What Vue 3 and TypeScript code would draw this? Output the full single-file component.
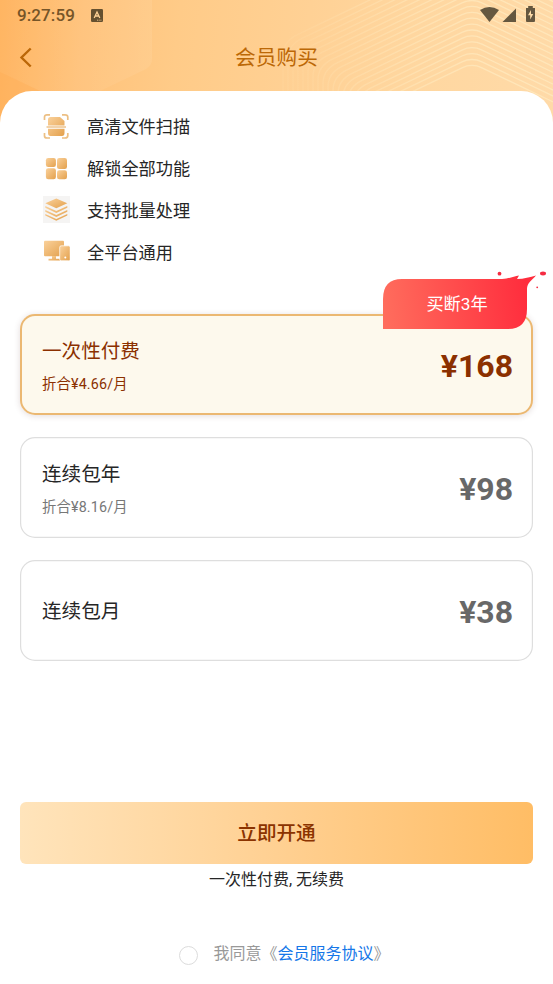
<script setup lang="ts">
import { ref } from 'vue'

interface Feature { icon: 'scan' | 'grid' | 'layers' | 'devices'; label: string }
interface Plan { id: number; name: string; note?: string; price: string; tag?: string }

const features: Feature[] = [
  { icon: 'scan', label: '高清文件扫描' },
  { icon: 'grid', label: '解锁全部功能' },
  { icon: 'layers', label: '支持批量处理' },
  { icon: 'devices', label: '全平台通用' },
]
const plans: Plan[] = [
  { id: 1, name: '一次性付费', note: '折合¥4.66/月', price: '¥168', tag: '买断3年' },
  { id: 2, name: '连续包年', note: '折合¥8.16/月', price: '¥98' },
  { id: 3, name: '连续包月', price: '¥38' },
]
const selected = ref(1)
const agreed = ref(false)

// Concentric rounded hexagon outlines in the header
const contours: string[] = Array.from({ length: 20 }, (_, i) => {
  const top = 63 - 5.9 * i
  const left = 378 - 5 * i
  const cornerY = top + 0.48 * (472 - left)
  return `M${left} 170V${cornerY + 14}Q${left} ${cornerY} ${left + 14} ${cornerY - 6.7}L462 ${top + 4.8}Q472 ${top} 482 ${top + 4.8}L570 ${top + 47}`
})
</script>

<template>
  <div class="page">
    <header class="header">
      <svg class="backdrop" viewBox="0 0 553 124" width="553" height="124" aria-hidden="true">
        <defs>
          <linearGradient id="hex" x1="0" y1="0" x2="1" y2="0">
            <stop offset="0" stop-color="#fff" stop-opacity="0" />
            <stop offset="1" stop-color="#fff" stop-opacity=".07" />
          </linearGradient>
          <linearGradient id="fade" gradientUnits="userSpaceOnUse" x1="300" y1="0" x2="480" y2="0">
            <stop offset="0" stop-color="#fff0c8" stop-opacity=".08" />
            <stop offset="1" stop-color="#fff0c8" stop-opacity=".55" />
          </linearGradient>
        </defs>
        <path d="M0 0H152V59Q152 65 146 69L98 92H42L0 72Z" fill="url(#hex)" />
        <path d="M0 72L42 92V124H0Z" fill="#ffa84b" opacity=".25" />
        <path v-for="(d, i) in contours" :key="i" :d="d" fill="none" stroke="url(#fade)" stroke-width="1.3" />
      </svg>
      <div class="status">
        <span class="time">9:27:59</span>
        <svg class="ime" viewBox="0 0 12 13" width="12" height="13">
          <rect width="12" height="13" rx="1.2" fill="#65502f" />
          <path d="M3.2 9L6 3L8.8 9M4.3 7H7.7" fill="none" stroke="#ffd295" stroke-width="1.3" />
          <path d="M6 11.2H10.5" stroke="#ffd295" stroke-width=".8" stroke-dasharray="1 .7" />
        </svg>
        <svg class="signals" viewBox="0 0 56 18" width="56" height="18">
          <g fill="#65573f">
            <path d="M0 4Q9.5-2 19 4L9.500 16Z" />
            <path d="M22.500 16L36 2.500V16Z" />
            <path d="M48.200 0H52.800V2H55V15Q55 16 54 16H47Q46 16 46 15V2H48.200Z" />
          </g>
          <path d="M51 4L48 9.200H50.200V13.500L53.200 8H51Z" fill="#ffdda9" />
        </svg>
      </div>
      <div class="nav">
        <svg class="back" viewBox="0 0 14 22" width="14" height="22">
          <path d="M11.700 1.500L2.500 10.500L11.700 19.500" fill="none" stroke="#bb6708" stroke-width="2.4" />
        </svg>
        <h1>会员购买</h1>
      </div>
    </header>

    <main class="sheet">
      <ul class="features">
        <li v-for="item in features" :key="item.icon">
          <svg viewBox="0 0 28 28" width="28" height="28">
            <defs>
              <linearGradient :id="`gold-${item.icon}`" x1="0" y1="0" x2="1" y2="1">
                <stop offset="0" stop-color="#fad19b" />
                <stop offset="1" stop-color="#e3a04c" />
              </linearGradient>
            </defs>
            <g v-if="item.icon === 'scan'">
              <path d="M2.500 8V5Q2.500 2.800 5 2.800H8M20 2.800H23Q25.800 2.800 25.800 5V8M2.500 21V24Q2.500 26 5 26H8M20 26H23Q25.800 26 25.800 23.500V21" fill="none" stroke="#ecbf83" stroke-width="1.7" />
              <path d="M6 13.500V7.500Q6 5 8.500 5H18L22.500 9V13.500ZM6 16.700H22.500V21Q22.500 24 20 24H8.500Q6 24 6 21Z" fill="url(#gold-scan)" />
              <path d="M4.500 15H24" stroke="#e9ba7c" stroke-width="1.300" />
            </g>
            <g v-else-if="item.icon === 'grid'" fill="url(#gold-grid)">
              <rect x="3.900" y="4" width="10" height="9" rx="2.300" />
              <rect x="15" y="4" width="10" height="11" rx="2.300" />
              <rect x="3.900" y="14.300" width="10" height="10.900" rx="2.300" />
              <rect x="15" y="16.200" width="10" height="9" rx="2.300" />
            </g>
            <g v-else-if="item.icon === 'layers'">
              <rect x="1" y="1" width="27" height="27" fill="#f5f4f3" />
              <g transform="translate(0 1)">
                <path d="M14.300 2.500L25.300 7.300L14.300 12.200L3.300 7.300Z" fill="url(#gold-layers)" />
                <path d="M3.300 10L14.300 15.100L25.300 10V11.700L14.300 17L3.300 11.700ZM3.300 14L14.300 19.100L25.300 14V15.700L14.300 21L3.300 15.700ZM3.300 18L14.300 23.100L25.300 18V19.500L14.300 24.800L3.300 19.500Z" fill="url(#gold-layers)" />
              </g>
            </g>
            <g v-else fill="url(#gold-devices)">
              <rect x="2" y="3.800" width="20" height="15.500" rx="1" />
              <path d="M10 19H14V21.800H18V23.600H6.500V21.800H10Z" />
              <rect x="17.700" y="8.800" width="10.500" height="15" rx="1.500" stroke="#fff" stroke-width=".7" />
              <circle cx="23.300" cy="20.600" r="1" fill="#fff" />
            </g>
          </svg>
          <span>{{ item.label }}</span>
        </li>
      </ul>

      <section class="plans">
        <article
          v-for="plan in plans"
          :key="plan.id"
          class="plan"
          :class="{ active: selected === plan.id }"
          @click="selected = plan.id"
        >
          <div class="detail">
            <h2>{{ plan.name }}</h2>
            <p v-if="plan.note">{{ plan.note }}</p>
          </div>
          <strong class="price">{{ plan.price }}</strong>
          <div v-if="plan.tag" class="tag">
            <svg viewBox="0 0 164 60" width="164" height="60">
              <defs>
                <linearGradient id="ribbon" gradientUnits="userSpaceOnUse" x1="0" y1="40" x2="144" y2="20">
                  <stop offset="0" stop-color="#ff6d5d" />
                  <stop offset="1" stop-color="#ff2d3d" />
                </linearGradient>
              </defs>
              <path d="M0 58V28Q0 8 19 8H119C127 7.500 131 5.500 136 4.500L134 8C141 8 147 6 153 4.500C149 9 144 12 144 18V38Q144 58 125 58Z" fill="url(#ribbon)" />
              <g fill="#f52c42">
                <circle cx="116.500" cy="2.700" r="1.900" />
                <ellipse cx="160" cy="2.500" rx="3" ry="1.900" />
                <circle cx="154.200" cy="16.300" r=".9" />
              </g>
            </svg>
            <span>{{ plan.tag }}</span>
          </div>
        </article>
      </section>

      <footer class="checkout">
        <button class="buy" type="button">立即开通</button>
        <p class="renewal">一次性付费, 无续费</p>
        <label class="agreement">
          <input v-model="agreed" type="checkbox" />
          <span>我同意《<a>会员服务协议</a>》</span>
        </label>
      </footer>
    </main>
  </div>
</template>

<style>
body { background: #fff; }
</style>

<style scoped>
* { box-sizing: border-box; }
h1, h2, p, ul { margin: 0; padding: 0; font-weight: 400; }
.page {
  width: 553px;
  height: 984px;
  overflow: hidden;
  display: flex;
  flex-direction: column;
  font-family: Roboto, "Noto Sans CJK SC", sans-serif;
  color: #262626;
}
.header {
  position: relative;
  flex: none;
  height: 124px;
  background: linear-gradient(96deg, #ffb562 0%, #ffc27a 15%, #ffcb88 32%, #ffd195 55%, #ffd7a0 75%, #ffdaa8 100%);
}
.backdrop { position: absolute; inset: 0; }
.status {
  position: relative;
  display: flex;
  align-items: center;
  height: 31px;
  padding: 0 17px;
}
.time { width: 74px; font-size: 17px; font-weight: 500; line-height: 31px; color: #765528; letter-spacing: .1px; }
.ime { margin-top: -1px; }
.signals { margin-left: auto; margin-top: -1px; }
.nav { position: relative; height: 52px; display: flex; align-items: center; padding: 0 19px; }
.back { margin-top: 1px; }
h1 { flex: 1; margin: 2px 14px 0 0; text-align: center; font-size: 20.700px; line-height: 30px; color: #bc6806; }
.sheet {
  position: relative;
  flex: 1;
  margin-top: -33px;
  padding: 14px 20px 0;
  border-radius: 32px 32px 0 0;
  background: #fff;
  display: flex;
  flex-direction: column;
}
.features { list-style: none; padding-left: 22px; }
.features li { height: 41.800px; display: flex; align-items: center; gap: 17px; font-size: 17.200px; }
.plans { display: flex; flex-direction: column; gap: 22px; margin-top: 42px; }
.plan {
  position: relative;
  height: 101px;
  padding: 2px 20px 0 22px;
  border-radius: 15px;
  box-shadow: inset 0 0 0 1.200px #dedede;
  display: flex;
  align-items: center;
  justify-content: space-between;
}
.plan h2 { font-size: 19.600px; line-height: 29px; }
.plan p { margin-top: 8px; font-size: 14.300px; line-height: 21px; letter-spacing: .18px; color: #777; }
.price { font-size: 32px; line-height: 40px; font-weight: 700; color: #686868; }
.plan.active { background: #fdf9ed; box-shadow: inset 0 0 0 2px #ebb872, 0 1px 6px rgba(80, 40, 40, .16); }
.active h2, .active p, .active .price { color: #8b3000; }
.tag { position: absolute; left: 363px; top: -43px; width: 164px; height: 60px; }
.tag svg { display: block; }
.tag span { position: absolute; left: 2px; top: 8px; width: 144px; line-height: 50px; text-align: center; font-size: 17.200px; color: #fff; }
.checkout { margin-top: 141px; display: flex; flex-direction: column; align-items: center; }
.buy {
  width: 100%;
  height: 61.500px;
  padding: 0 0 2px;
  border: 0;
  border-radius: 6px;
  background: linear-gradient(90deg, #ffe4bb, #ffd092 50%, #ffbd65);
  color: #8b3300;
  font-family: inherit;
  font-size: 19.600px;
  font-weight: 500;
}
.renewal { margin-top: 4.500px; font-size: 16px; line-height: 24px; }
.agreement { margin: 50px 0 0 16px; display: flex; align-items: center; gap: 15px; font-size: 16px; line-height: 24px; color: #999; }
.agreement input { appearance: none; width: 19px; height: 19px; margin: 3px 0 0; border: 1px solid #dcdcdc; border-radius: 50%; }
.agreement input:checked { background: #ffbd65; }
.agreement a { color: #1677e8; }
</style>
